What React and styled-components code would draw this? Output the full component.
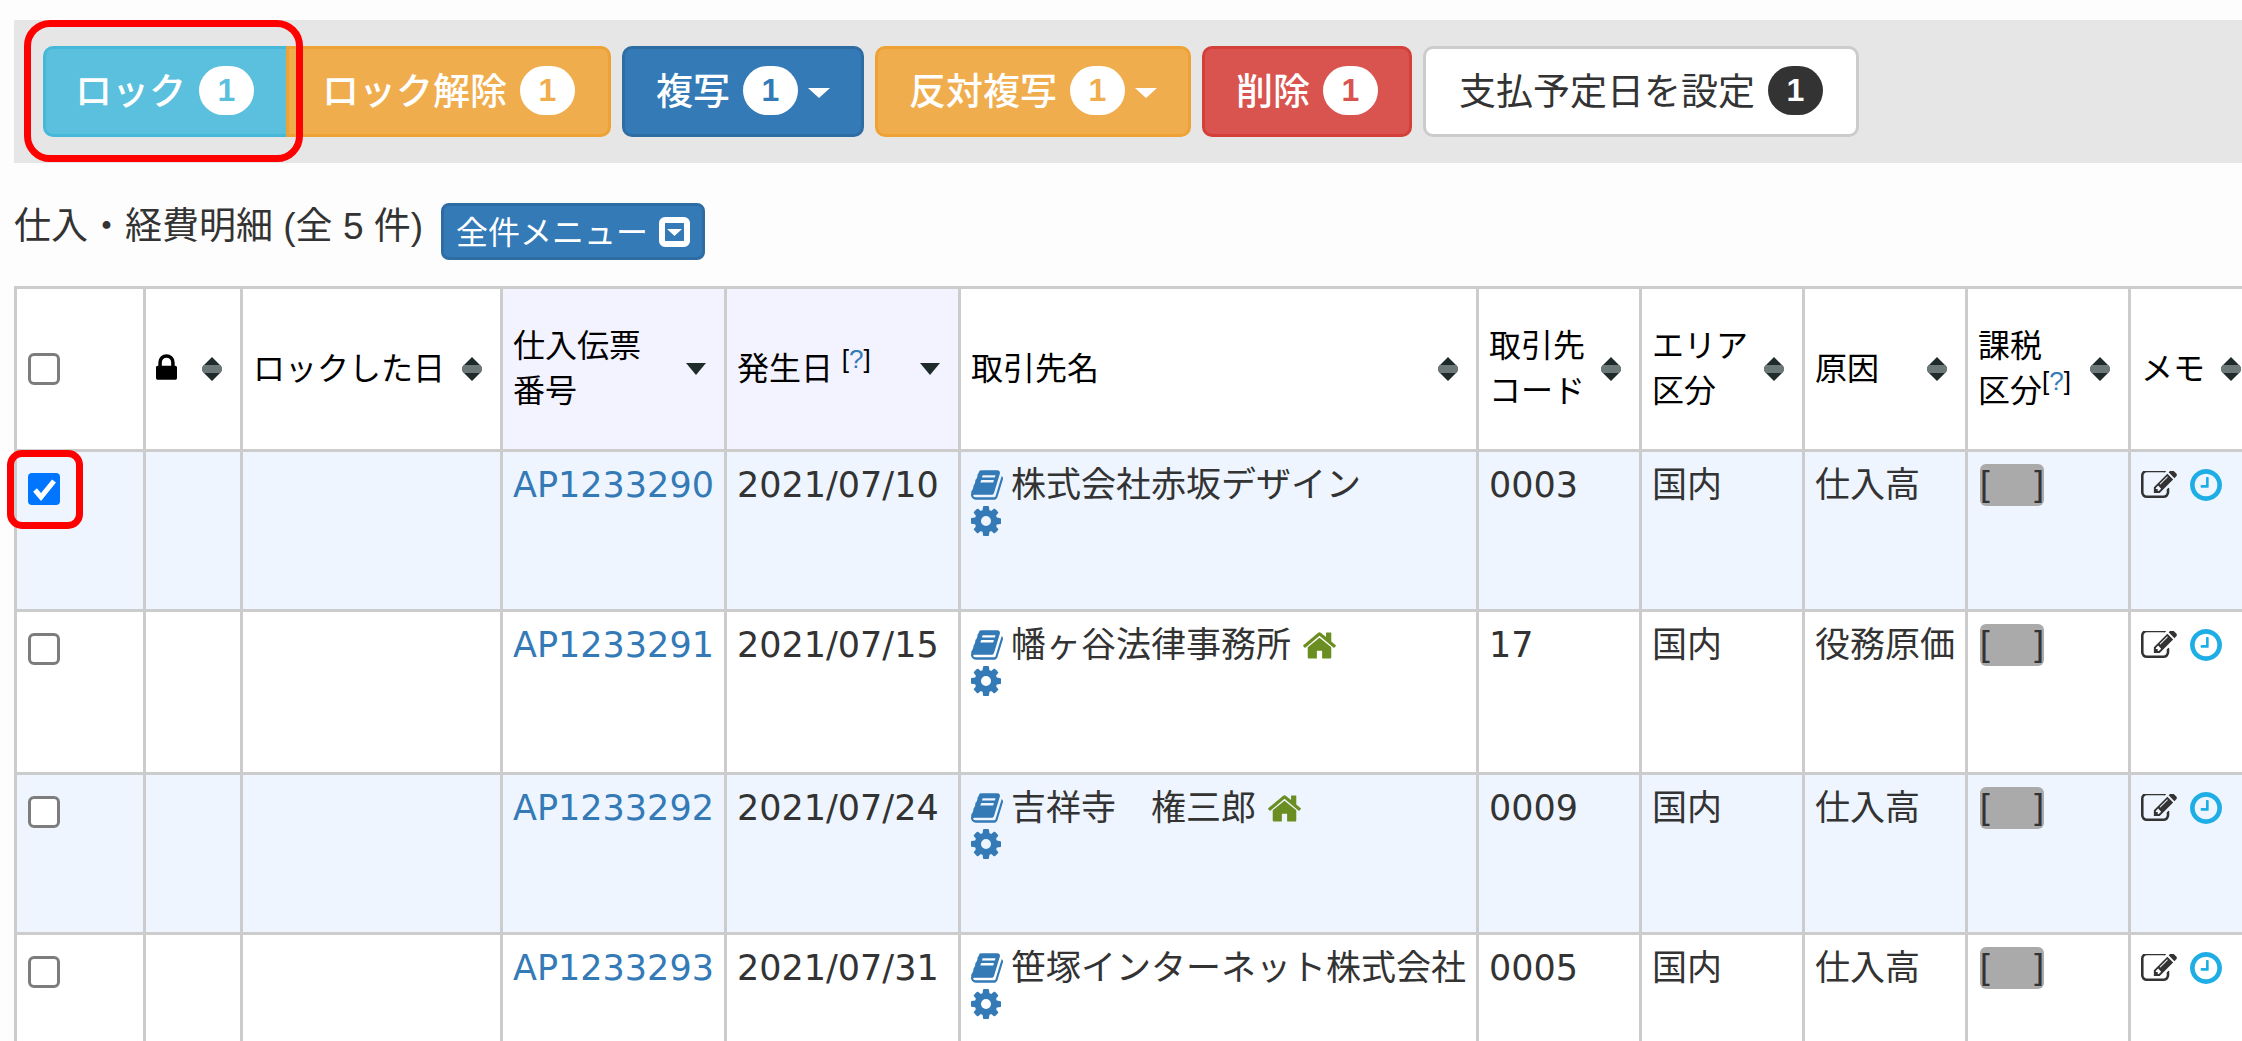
import React, { useState } from "react";
import styled, { createGlobalStyle, css } from "styled-components";

const GlobalStyle = createGlobalStyle`
  *, *::before, *::after { box-sizing: border-box; }
  body {
    margin: 0;
    background: #fdfdfd;
    color: #333;
    font-family: "Liberation Sans", "Noto Sans CJK JP", sans-serif;
  }
  button { font-family: inherit; }
`;

const tones = {
  info: { bg: "#5bc0de", border: "#46b8da", text: "#fff" },
  warning: { bg: "#f0ad4e", border: "#eea236", text: "#fff" },
  primary: { bg: "#337ab7", border: "#2e6da4", text: "#fff" },
  danger: { bg: "#d9534f", border: "#d43f3a", text: "#fff" },
  plain: { bg: "#fff", border: "#ccc", text: "#333" },
};

const Page = styled.main`
  height: 100vh;
  overflow: hidden;
  padding: 20px 0 0 14px;
`;

const Toolbar = styled.div`
  display: flex;
  gap: 11px;
  padding: 26px 29px;
  background: #e6e6e6;
`;

const ButtonGroup = styled.div`
  display: flex;
`;

const Marked = styled.div`
  position: relative;
  display: flex;
`;

const Callout = styled.span`
  position: absolute;
  z-index: 1;
  inset: ${(p) => p.$inset};
  border: 7px solid #f00;
  border-radius: ${(p) => p.$radius};
  pointer-events: none;
`;

const ActionButton = styled.button`
  display: flex;
  align-items: center;
  height: 91px;
  padding: 0 ${(p) => p.$pad - 3}px 2px;
  border: 3px solid ${(p) => tones[p.$tone].border};
  border-radius: 10px;
  background: ${(p) => tones[p.$tone].bg};
  color: ${(p) => tones[p.$tone].text};
  font-size: 37px;
  font-weight: ${(p) => (p.$tone === "plain" ? 400 : 500)};
  white-space: nowrap;
  cursor: pointer;
  ${(p) =>
    p.$join === "right" &&
    css`
      border-right: 0;
      padding-right: ${p.$pad}px;
      border-radius: 10px 0 0 10px;
    `}
  ${(p) =>
    p.$join === "left" &&
    css`
      border-radius: 0 10px 10px 0;
    `}
`;

const Label = styled.span`
  padding-bottom: 4px;
`;

const Badge = styled.span`
  min-width: 55px;
  height: 49px;
  margin-left: 13px;
  border-radius: 26px;
  background: ${(p) => (p.$tone === "plain" ? "#333" : "#fff")};
  color: ${(p) => (p.$tone === "plain" ? "#fff" : tones[p.$tone].bg)};
  font-size: 32px;
  font-weight: 700;
  line-height: 49px;
  text-align: center;
`;

const Caret = styled.span`
  margin: 5px 0 0 10px;
  border: 11px solid transparent;
  border-top: 10px solid currentColor;
  border-bottom: 0;
`;

const TitleRow = styled.div`
  display: flex;
  gap: 18px;
  margin: 40px 0 26px;
`;

const Title = styled.h1`
  margin: 0;
  font-size: 37px;
  font-weight: 400;
  line-height: 48px;
  white-space: nowrap;
`;

const MenuButton = styled.button`
  display: flex;
  align-items: center;
  gap: 11px;
  height: 57px;
  padding: 0 12px;
  border: 3px solid #2e6da4;
  border-radius: 8px;
  background: #337ab7;
  color: #fff;
  font-size: 32px;
  white-space: nowrap;
  cursor: pointer;
`;

const Table = styled.table`
  width: max-content;
  border-collapse: collapse;
`;

const Col = styled.col`
  width: ${(p) => p.$width}px;
`;

const HeadRow = styled.tr`
  height: 163px;
`;

const HeadCell = styled.th`
  padding: 0 18px 0 10px;
  border: 3px solid #ccc;
  background: ${(p) => (p.$sorted ? "#f3f3ff" : "#fff")};
  color: #000;
  font-size: 32px;
  font-weight: 400;
  line-height: 45px;
  text-align: left;
  white-space: nowrap;
`;

const HeadInner = styled.div`
  display: flex;
  align-items: center;
  justify-content: space-between;
`;

const SortButton = styled.button`
  display: flex;
  padding: 0;
  border: 0;
  background: none;
  cursor: pointer;
`;

const Help = styled.sup`
  font-size: 26px;
  line-height: 0;
`;

const BodyRow = styled.tr`
  height: 160px;
  background: #eef5fe;
  &:nth-child(even) {
    height: 163px;
    background: #fff;
  }
`;

const Cell = styled.td`
  padding: 15px 10px 0;
  border: 3px solid #ccc;
  font-family: "DejaVu Sans", "Noto Sans CJK JP", sans-serif;
  font-size: 35px;
  line-height: 36px;
  vertical-align: top;
  white-space: nowrap;
`;

const Link = styled.a`
  color: #337ab7;
  text-decoration: none;
`;

const Line = styled.div`
  display: flex;
  align-items: center;
  height: 36px;
`;

const IconLink = styled.a`
  display: flex;
  color: ${(p) => p.$color || "#337ab7"};
`;

const PartnerName = styled.span`
  margin-left: 8px;
`;

const HomeMark = styled.span`
  display: flex;
  margin-left: 12px;
  color: #6b8e23;
`;

const TaxTag = styled.span`
  display: flex;
  justify-content: space-between;
  width: 64px;
  height: 42px;
  margin: -3px 2px 0;
  border-radius: 6px;
  background: #aaa;
  font-family: "Liberation Sans", "Noto Sans CJK JP", sans-serif;
  line-height: 40px;
`;

const MemoLine = styled(Line)`
  gap: 13px;
`;

const CheckLabel = styled.label`
  position: relative;
  display: block;
  width: 32px;
  height: 32px;
  margin: ${(p) => (p.$head ? "0" : "6px")} 1px 0;
`;

const CheckInput = styled.input`
  appearance: none;
  display: block;
  width: 32px;
  height: 32px;
  margin: 0;
  border: 3px solid #7d7d7d;
  border-radius: 6px;
  background: #fff;
  &:checked {
    border-color: #0075ff;
    background: #0075ff;
    border-radius: 4px;
  }
`;

const CheckMark = styled.svg`
  position: absolute;
  inset: 0;
  pointer-events: none;
`;

const paths = {
  lock: "M640 768h512v-192q0-106-75-181t-181-75-181 75-75 181v192zm832 96v576q0 40-28 68t-68 28h-960q-40 0-68-28t-28-68v-576q0-40 28-68t68-28h32v-192q0-184 132-316t316-132 316 132 132 316v192h32q40 0 68 28t28 68z",
  book: "M1703 478q40 57 18 129l-275 906q-19 64-76.5 107.5t-122.5 43.5h-923q-77 0-148.5-53.5t-99.5-131.5q-24-67-2-127 0-4 3-27t4-37q1-8-3-21.5t-3-19.5q2-11 8-21t16.5-23.5 16.5-23.5q23-38 45-91.5t30-91.5q3-10 .5-30t-.5-28q3-11 17-28t17-23q21-36 42-92t25-90q1-9-2.5-32t.5-28q4-13 22-30.5t22-22.5q19-26 42.5-84.5t27.5-96.5q1-8-3-25.5t-2-26.5q2-8 9-18t18-23 17-21q8-12 16.5-30.5t15-35 16-36 19.5-32 26.5-23.5 36-11.5 47.5 5.5l-1 3q38-9 51-9h761q74 0 114 56t18 130l-274 906q-36 119-71.5 153.5t-128.5 34.5h-869q-27 0-38 15-11 16-1 43 24 70 144 70h923q29 0 56-15.5t35-41.5l300-987q7-22 5-57 38 15 59 43zm-1064 2q-4 13 2 22.5t20 9.5h608q13 0 25.5-9.5t16.5-22.5l21-64q4-13-2-22.5t-20-9.5h-608q-13 0-25.5 9.5t-16.5 22.5zm-83 256q-4 13 2 22.5t20 9.5h608q13 0 25.5-9.5t16.5-22.5l21-64q4-13-2-22.5t-20-9.5h-608q-13 0-25.5 9.5t-16.5 22.5z",
  cog: "M1152 896q0-106-75-181t-181-75-181 75-75 181 75 181 181 75 181-75 75-181zm512-109v222q0 12-8 23t-20 13l-185 28q-19 54-39 91 35 50 107 138 10 12 10 25t-9 23q-27 37-99 108t-94 71q-12 0-26-9l-138-108q-44 23-91 38-16 136-29 186-7 28-36 28h-222q-14 0-24.5-8.5t-11.5-21.5l-28-184q-49-16-90-37l-141 107q-10 9-25 9-14 0-25-11-126-114-165-168-7-10-7-23 0-12 8-23 15-21 51-66.5t54-70.5q-27-50-41-99l-183-27q-13-2-21-12.5t-8-23.5v-222q0-12 8-23t19-13l186-28q14-46 39-92-40-57-107-138-10-12-10-24 0-10 9-23 26-36 98.5-107.5t94.5-71.5q13 0 26 10l138 107q44-23 91-38 16-136 29-186 7-28 36-28h222q14 0 24.5 8.5t11.5 21.5l28 184q49 16 90 37l142-107q9-9 24-9 13 0 25 10 129 119 165 170 7 8 7 22 0 12-8 23-15 21-51 66.5t-54 70.5q26 50 41 98l183 28q13 2 21 12.5t8 23.5z",
  home: "M1472 992v480q0 26-19 45t-45 19h-384v-384h-256v384h-384q-26 0-45-19t-19-45v-480q0-1 .5-3t.5-3l575-474 575 474q1 2 1 6zm223-69l-62 74q-8 9-21 11h-3q-13 0-21-7l-692-577-692 577q-12 8-24 7-13-2-21-11l-62-74q-8-10-7-23.5t11-21.5l719-599q32-26 76-26t76 26l244 204v-195q0-14 9-23t23-9h192q14 0 23 9t9 23v408l219 182q10 8 11 21.5t-7 23.5z",
  clock: "M1024 544v448q0 14-9 23t-23 9h-320q-14 0-23-9t-9-23v-64q0-14 9-23t23-9h224v-352q0-14 9-23t23-9h64q14 0 23 9t9 23zm416 352q0-148-73-273t-198-198-273-73-273 73-198 198-73 273 73 273 198 198 273 73 273-73 198-198 73-273zm224 0q0 209-103 385.5t-279.5 279.5-385.5 103-385.5-103-279.5-279.5-103-385.5 103-385.5 279.5-279.5 385.5-103 385.5 103 279.5 279.5 103 385.5z",
  edit: "M888 1184l116-116-152-152-116 116v56h96v96h56zm440-720q-16-16-33 1l-350 350q-17 17-1 33t33-1l350-350q17-17 1-33zm80 594v190q0 119-84.5 203.5t-203.5 84.5h-832q-119 0-203.5-84.5t-84.5-203.5v-832q0-119 84.5-203.5t203.5-84.5h832q63 0 117 25 15 7 18 23 3 17-9 29l-49 49q-14 14-32 8-23-6-45-6h-832q-66 0-113 47t-47 113v832q0 66 47 113t113 47h832q66 0 113-47t47-113v-126q0-13 9-22l64-64q15-15 35-7t20 29zm-96-738l288 288-672 672h-288v-288zm444 132l-92 92-288-288 92-92q28-28 68-28t68 28l152 152q28 28 28 68t-28 68z",
};

const shapes = {
  lock: { box: "320 128 1152 1408", w: 21, h: 26 },
  book: { box: "64 128 1664 1536", w: 32, h: 30 },
  cog: { box: "128 128 1536 1536", w: 30, h: 30 },
  home: { box: "89 250 1614 1290", w: 33, h: 27 },
  clock: { box: "128 128 1536 1536", w: 32, h: 32 },
  edit: { box: "0 230 1792 1310", w: 36, h: 28 },
};

function Icon({ name }) {
  const s = shapes[name];
  return (
    <svg width={s.w} height={s.h} viewBox={s.box} fill="currentColor" aria-hidden="true">
      <path d={paths[name]} />
    </svg>
  );
}

function SortIcon({ sorted }) {
  return (
    <svg width="20" height="24" viewBox="0 0 20 24" aria-hidden="true">
      {sorted ? (
        <path d="M0 6h20L10 18z" fill="#1f2b2b" />
      ) : (
        <>
          <path d="M10 0l9 9H1zM10 24l9-9H1z" fill="#1f2b2b" />
          <path d="M2 8h16l2 2v4l-2 2H2l-2-2v-4z" fill="#6c7777" />
        </>
      )}
    </svg>
  );
}

function MenuIcon() {
  return (
    <svg width="31" height="30" viewBox="0 0 31 30" aria-hidden="true">
      <rect x="3" y="3" width="25" height="24" rx="3" fill="none" stroke="#fff" strokeWidth="6" />
      <path d="M8 12h15l-7.500 7z" fill="#fff" />
    </svg>
  );
}

function Check({ checked, onChange, label, head, marked }) {
  return (
    <CheckLabel $head={head}>
      <CheckInput type="checkbox" checked={checked} onChange={onChange} aria-label={label} />
      {checked && (
        <CheckMark width="32" height="32" viewBox="0 0 32 32">
          <path d="M7 17l6 7L26 8" fill="none" stroke="#fff" strokeWidth="5" />
        </CheckMark>
      )}
      {marked && <Callout $inset="-23px -23px -24px -21px" $radius="15px" />}
    </CheckLabel>
  );
}

function Action({ tone, label, pad, join, caret }) {
  return (
    <ActionButton type="button" $tone={tone} $pad={pad} $join={join}>
      <Label>{label}</Label>
      <Badge $tone={tone}>1</Badge>
      {caret && <Caret />}
    </ActionButton>
  );
}

const help = (
  <Help>
    [<Link href="#help">?</Link>]
  </Help>
);

const columns = [
  { key: "lock", width: 97, head: <Icon name="lock" /> },
  { key: "lockedOn", width: 260, head: "ロックした日" },
  { key: "slip", width: 223, head: <>仕入伝票<br />番号</>, sorted: true },
  { key: "date", width: 234, head: <>発生日 {help}</>, sorted: true },
  { key: "partner", width: 518, head: "取引先名" },
  { key: "code", width: 163, head: <>取引先<br />コード</> },
  { key: "area", width: 163, head: <>エリア<br />区分</> },
  { key: "cause", width: 163, head: "原因" },
  { key: "tax", width: 163, head: <>課税<br />区分{help}</> },
  { key: "memo", width: 131, head: "メモ" },
];

const rows = [
  { slip: "AP1233290", date: "2021/07/10", partner: "株式会社赤坂デザイン", code: "0003", cause: "仕入高" },
  { slip: "AP1233291", date: "2021/07/15", partner: "幡ヶ谷法律事務所", home: true, code: "17", cause: "役務原価" },
  { slip: "AP1233292", date: "2021/07/24", partner: "吉祥寺　権三郎", home: true, code: "0009", cause: "仕入高" },
  { slip: "AP1233293", date: "2021/07/31", partner: "笹塚インターネット株式会社", code: "0005", cause: "仕入高" },
];

export default function App() {
  const [selected, setSelected] = useState(["AP1233290"]);
  const toggle = (slip) =>
    setSelected((list) => (list.includes(slip) ? list.filter((s) => s !== slip) : [...list, slip]));
  const all = selected.length === rows.length;

  return (
    <>
      <GlobalStyle />
      <Page lang="ja">
        <Toolbar>
          <ButtonGroup>
            <Marked>
              <Action tone="info" label="ロック" pad={32} join="right" />
              <Callout $inset="-26px -17px -25px -19px" $radius="26px" />
            </Marked>
            <Action tone="warning" label="ロック解除" pad={36} join="left" />
          </ButtonGroup>
          <Action tone="primary" label="複写" pad={34} caret />
          <Action tone="warning" label="反対複写" pad={34} caret />
          <Action tone="danger" label="削除" pad={34} />
          <Action tone="plain" label="支払予定日を設定" pad={36} />
        </Toolbar>

        <TitleRow>
          <Title>仕入・経費明細 (全 5 件)</Title>
          <MenuButton type="button">
            <Label>全件メニュー</Label>
            <MenuIcon />
          </MenuButton>
        </TitleRow>

        <Table>
          <colgroup>
            <Col $width={129} />
            {columns.map((c) => (
              <Col key={c.key} $width={c.width} />
            ))}
          </colgroup>
          <thead>
            <HeadRow>
              <HeadCell>
                <Check
                  head
                  checked={all}
                  onChange={() => setSelected(all ? [] : rows.map((r) => r.slip))}
                  label="すべて選択"
                />
              </HeadCell>
              {columns.map((c) => (
                <HeadCell key={c.key} $sorted={c.sorted}>
                  <HeadInner>
                    <span>{c.head}</span>
                    <SortButton type="button" aria-label="並べ替え">
                      <SortIcon sorted={c.sorted} />
                    </SortButton>
                  </HeadInner>
                </HeadCell>
              ))}
            </HeadRow>
          </thead>
          <tbody>
            {rows.map((r, i) => (
              <BodyRow key={r.slip}>
                <Cell>
                  <Check
                    checked={selected.includes(r.slip)}
                    onChange={() => toggle(r.slip)}
                    label={r.slip}
                    marked={i === 0}
                  />
                </Cell>
                <Cell />
                <Cell />
                <Cell>
                  <Link href={"#" + r.slip}>{r.slip}</Link>
                </Cell>
                <Cell>{r.date}</Cell>
                <Cell>
                  <Line>
                    <IconLink href="#book" aria-label="台帳">
                      <Icon name="book" />
                    </IconLink>
                    <PartnerName>{r.partner}</PartnerName>
                    {r.home && (
                      <HomeMark>
                        <Icon name="home" />
                      </HomeMark>
                    )}
                  </Line>
                  <Line>
                    <IconLink href="#settings" aria-label="設定">
                      <Icon name="cog" />
                    </IconLink>
                  </Line>
                </Cell>
                <Cell>{r.code}</Cell>
                <Cell>国内</Cell>
                <Cell>{r.cause}</Cell>
                <Cell>
                  <TaxTag>
                    <span>[</span>
                    <span>]</span>
                  </TaxTag>
                </Cell>
                <Cell>
                  <MemoLine>
                    <IconLink href="#memo" aria-label="メモを編集" $color="#333">
                      <Icon name="edit" />
                    </IconLink>
                    <IconLink href="#history" aria-label="履歴" $color="#1eaee5">
                      <Icon name="clock" />
                    </IconLink>
                  </MemoLine>
                </Cell>
              </BodyRow>
            ))}
          </tbody>
        </Table>
      </Page>
    </>
  );
}
